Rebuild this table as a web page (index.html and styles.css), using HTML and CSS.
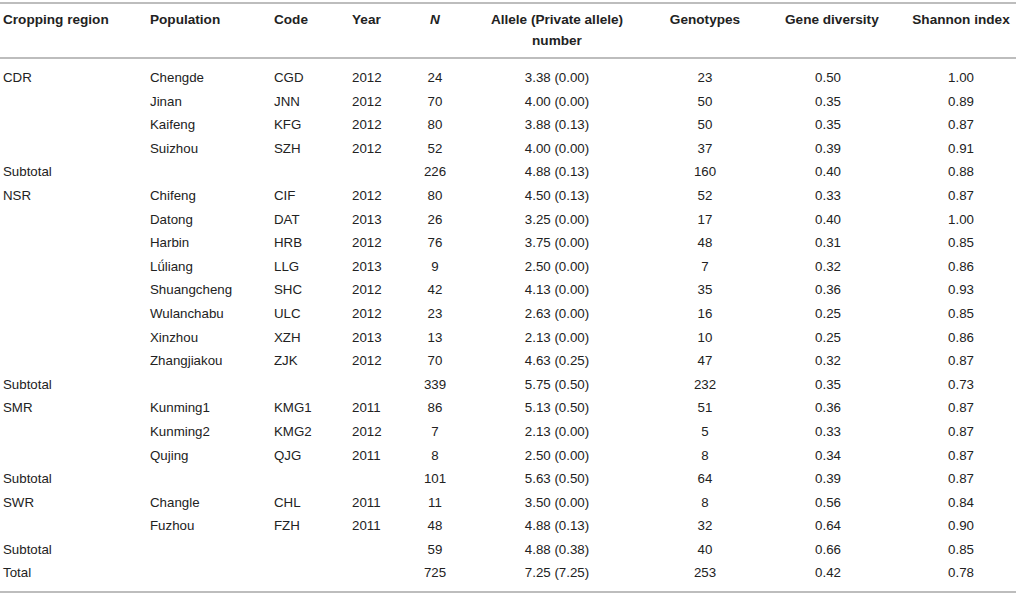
FILE: index.html
```html
<!DOCTYPE html>
<html lang="en">
<head>
  <meta charset="UTF-8">
  <title>Genetic diversity by cropping region</title>
  <link rel="stylesheet" href="styles.css">
</head>
<body>

  <table class="data-table">
    <colgroup>
      <col class="c-region">
      <col class="c-pop">
      <col class="c-code">
      <col class="c-year">
      <col class="c-n">
      <col class="c-allele">
      <col class="c-geno">
      <col class="c-div">
      <col class="c-shannon">
    </colgroup>
    <thead>
      <tr>
        <th class="txt">Cropping region</th>
        <th class="txt">Population</th>
        <th class="txt">Code</th>
        <th class="txt">Year</th>
        <th class="num"><em>N</em></th>
        <th class="num allele">Allele (Private allele)<br>number</th>
        <th class="num">Genotypes</th>
        <th class="num div">Gene diversity</th>
        <th class="num shannon">Shannon index</th>
      </tr>
    </thead>
    <tbody>
      <tr><td>CDR</td><td>Chengde</td><td>CGD</td><td>2012</td><td class="num">24</td><td class="num allele">3.38 (0.00)</td><td class="num">23</td><td class="num div">0.50</td><td class="num shannon">1.00</td></tr>
      <tr><td></td><td>Jinan</td><td>JNN</td><td>2012</td><td class="num">70</td><td class="num allele">4.00 (0.00)</td><td class="num">50</td><td class="num div">0.35</td><td class="num shannon">0.89</td></tr>
      <tr><td></td><td>Kaifeng</td><td>KFG</td><td>2012</td><td class="num">80</td><td class="num allele">3.88 (0.13)</td><td class="num">50</td><td class="num div">0.35</td><td class="num shannon">0.87</td></tr>
      <tr><td></td><td>Suizhou</td><td>SZH</td><td>2012</td><td class="num">52</td><td class="num allele">4.00 (0.00)</td><td class="num">37</td><td class="num div">0.39</td><td class="num shannon">0.91</td></tr>
      <tr><td>Subtotal</td><td></td><td></td><td></td><td class="num">226</td><td class="num allele">4.88 (0.13)</td><td class="num">160</td><td class="num div">0.40</td><td class="num shannon">0.88</td></tr>
      <tr><td>NSR</td><td>Chifeng</td><td>CIF</td><td>2012</td><td class="num">80</td><td class="num allele">4.50 (0.13)</td><td class="num">52</td><td class="num div">0.33</td><td class="num shannon">0.87</td></tr>
      <tr><td></td><td>Datong</td><td>DAT</td><td>2013</td><td class="num">26</td><td class="num allele">3.25 (0.00)</td><td class="num">17</td><td class="num div">0.40</td><td class="num shannon">1.00</td></tr>
      <tr><td></td><td>Harbin</td><td>HRB</td><td>2012</td><td class="num">76</td><td class="num allele">3.75 (0.00)</td><td class="num">48</td><td class="num div">0.31</td><td class="num shannon">0.85</td></tr>
      <tr><td></td><td>Lǘliang</td><td>LLG</td><td>2013</td><td class="num">9</td><td class="num allele">2.50 (0.00)</td><td class="num">7</td><td class="num div">0.32</td><td class="num shannon">0.86</td></tr>
      <tr><td></td><td>Shuangcheng</td><td>SHC</td><td>2012</td><td class="num">42</td><td class="num allele">4.13 (0.00)</td><td class="num">35</td><td class="num div">0.36</td><td class="num shannon">0.93</td></tr>
      <tr><td></td><td>Wulanchabu</td><td>ULC</td><td>2012</td><td class="num">23</td><td class="num allele">2.63 (0.00)</td><td class="num">16</td><td class="num div">0.25</td><td class="num shannon">0.85</td></tr>
      <tr><td></td><td>Xinzhou</td><td>XZH</td><td>2013</td><td class="num">13</td><td class="num allele">2.13 (0.00)</td><td class="num">10</td><td class="num div">0.25</td><td class="num shannon">0.86</td></tr>
      <tr><td></td><td>Zhangjiakou</td><td>ZJK</td><td>2012</td><td class="num">70</td><td class="num allele">4.63 (0.25)</td><td class="num">47</td><td class="num div">0.32</td><td class="num shannon">0.87</td></tr>
      <tr><td>Subtotal</td><td></td><td></td><td></td><td class="num">339</td><td class="num allele">5.75 (0.50)</td><td class="num">232</td><td class="num div">0.35</td><td class="num shannon">0.73</td></tr>
      <tr><td>SMR</td><td>Kunming1</td><td>KMG1</td><td>2011</td><td class="num">86</td><td class="num allele">5.13 (0.50)</td><td class="num">51</td><td class="num div">0.36</td><td class="num shannon">0.87</td></tr>
      <tr><td></td><td>Kunming2</td><td>KMG2</td><td>2012</td><td class="num">7</td><td class="num allele">2.13 (0.00)</td><td class="num">5</td><td class="num div">0.33</td><td class="num shannon">0.87</td></tr>
      <tr><td></td><td>Qujing</td><td>QJG</td><td>2011</td><td class="num">8</td><td class="num allele">2.50 (0.00)</td><td class="num">8</td><td class="num div">0.34</td><td class="num shannon">0.87</td></tr>
      <tr><td>Subtotal</td><td></td><td></td><td></td><td class="num">101</td><td class="num allele">5.63 (0.50)</td><td class="num">64</td><td class="num div">0.39</td><td class="num shannon">0.87</td></tr>
      <tr><td>SWR</td><td>Changle</td><td>CHL</td><td>2011</td><td class="num">11</td><td class="num allele">3.50 (0.00)</td><td class="num">8</td><td class="num div">0.56</td><td class="num shannon">0.84</td></tr>
      <tr><td></td><td>Fuzhou</td><td>FZH</td><td>2011</td><td class="num">48</td><td class="num allele">4.88 (0.13)</td><td class="num">32</td><td class="num div">0.64</td><td class="num shannon">0.90</td></tr>
      <tr><td>Subtotal</td><td></td><td></td><td></td><td class="num">59</td><td class="num allele">4.88 (0.38)</td><td class="num">40</td><td class="num div">0.66</td><td class="num shannon">0.85</td></tr>
      <tr><td>Total</td><td></td><td></td><td></td><td class="num">725</td><td class="num allele">7.25 (7.25)</td><td class="num">253</td><td class="num div">0.42</td><td class="num shannon">0.78</td></tr>
    </tbody>
  </table>

</body>
</html>
```

FILE: styles.css
```css
/* Reset */
* {
  margin: 0;
  padding: 0;
  box-sizing: border-box;
}

body {
  background: #ffffff;
  color: #222222;
  font-family: 'Liberation Sans', Arial, Helvetica, sans-serif;
  font-size: 13.3px;
  padding-top: 2px;
}

/* Table */
.data-table {
  width: 1016px;
  table-layout: fixed;
  border-collapse: collapse;
  border-top: 2px solid #bdbdbd;
  border-bottom: 2px solid #bdbdbd;
}

.c-region { width: 147px; }
.c-pop { width: 124px; }
.c-code { width: 78px; }
.c-year { width: 56px; }
.c-n { width: 60px; }
.c-allele { width: 160px; }
.c-geno { width: 160px; }
.c-div { width: 96px; }
.c-shannon { width: 135px; }

/* Header */
.data-table th {
  font-weight: bold;
  font-size: 13.6px;
  line-height: 21px;
  vertical-align: top;
  padding: 5px 0 6px 3px;
  border-bottom: 2px solid #bdbdbd;
  white-space: nowrap;
}

.data-table th.txt { text-align: left; }
.data-table th.num { text-align: center; padding-left: 0; }
.data-table th.allele { padding-left: 24px; }
.data-table th.div { padding-right: 10px; }
.data-table th.shannon { padding-left: 25px; }

.data-table th em {
  font-style: italic;
}

/* Body */
.data-table td {
  line-height: 23.6px;
  padding: 0 0 0 3px;
  white-space: nowrap;
}

.data-table td.num {
  text-align: center;
  padding-left: 0;
}

.data-table td.allele { padding-left: 24px; }
.data-table td.div { padding-right: 10px; }
.data-table td.shannon { padding-left: 25px; }

.data-table tbody tr:first-child td { padding-top: 7px; }
.data-table tbody tr:last-child td { padding-bottom: 6px; }
```
